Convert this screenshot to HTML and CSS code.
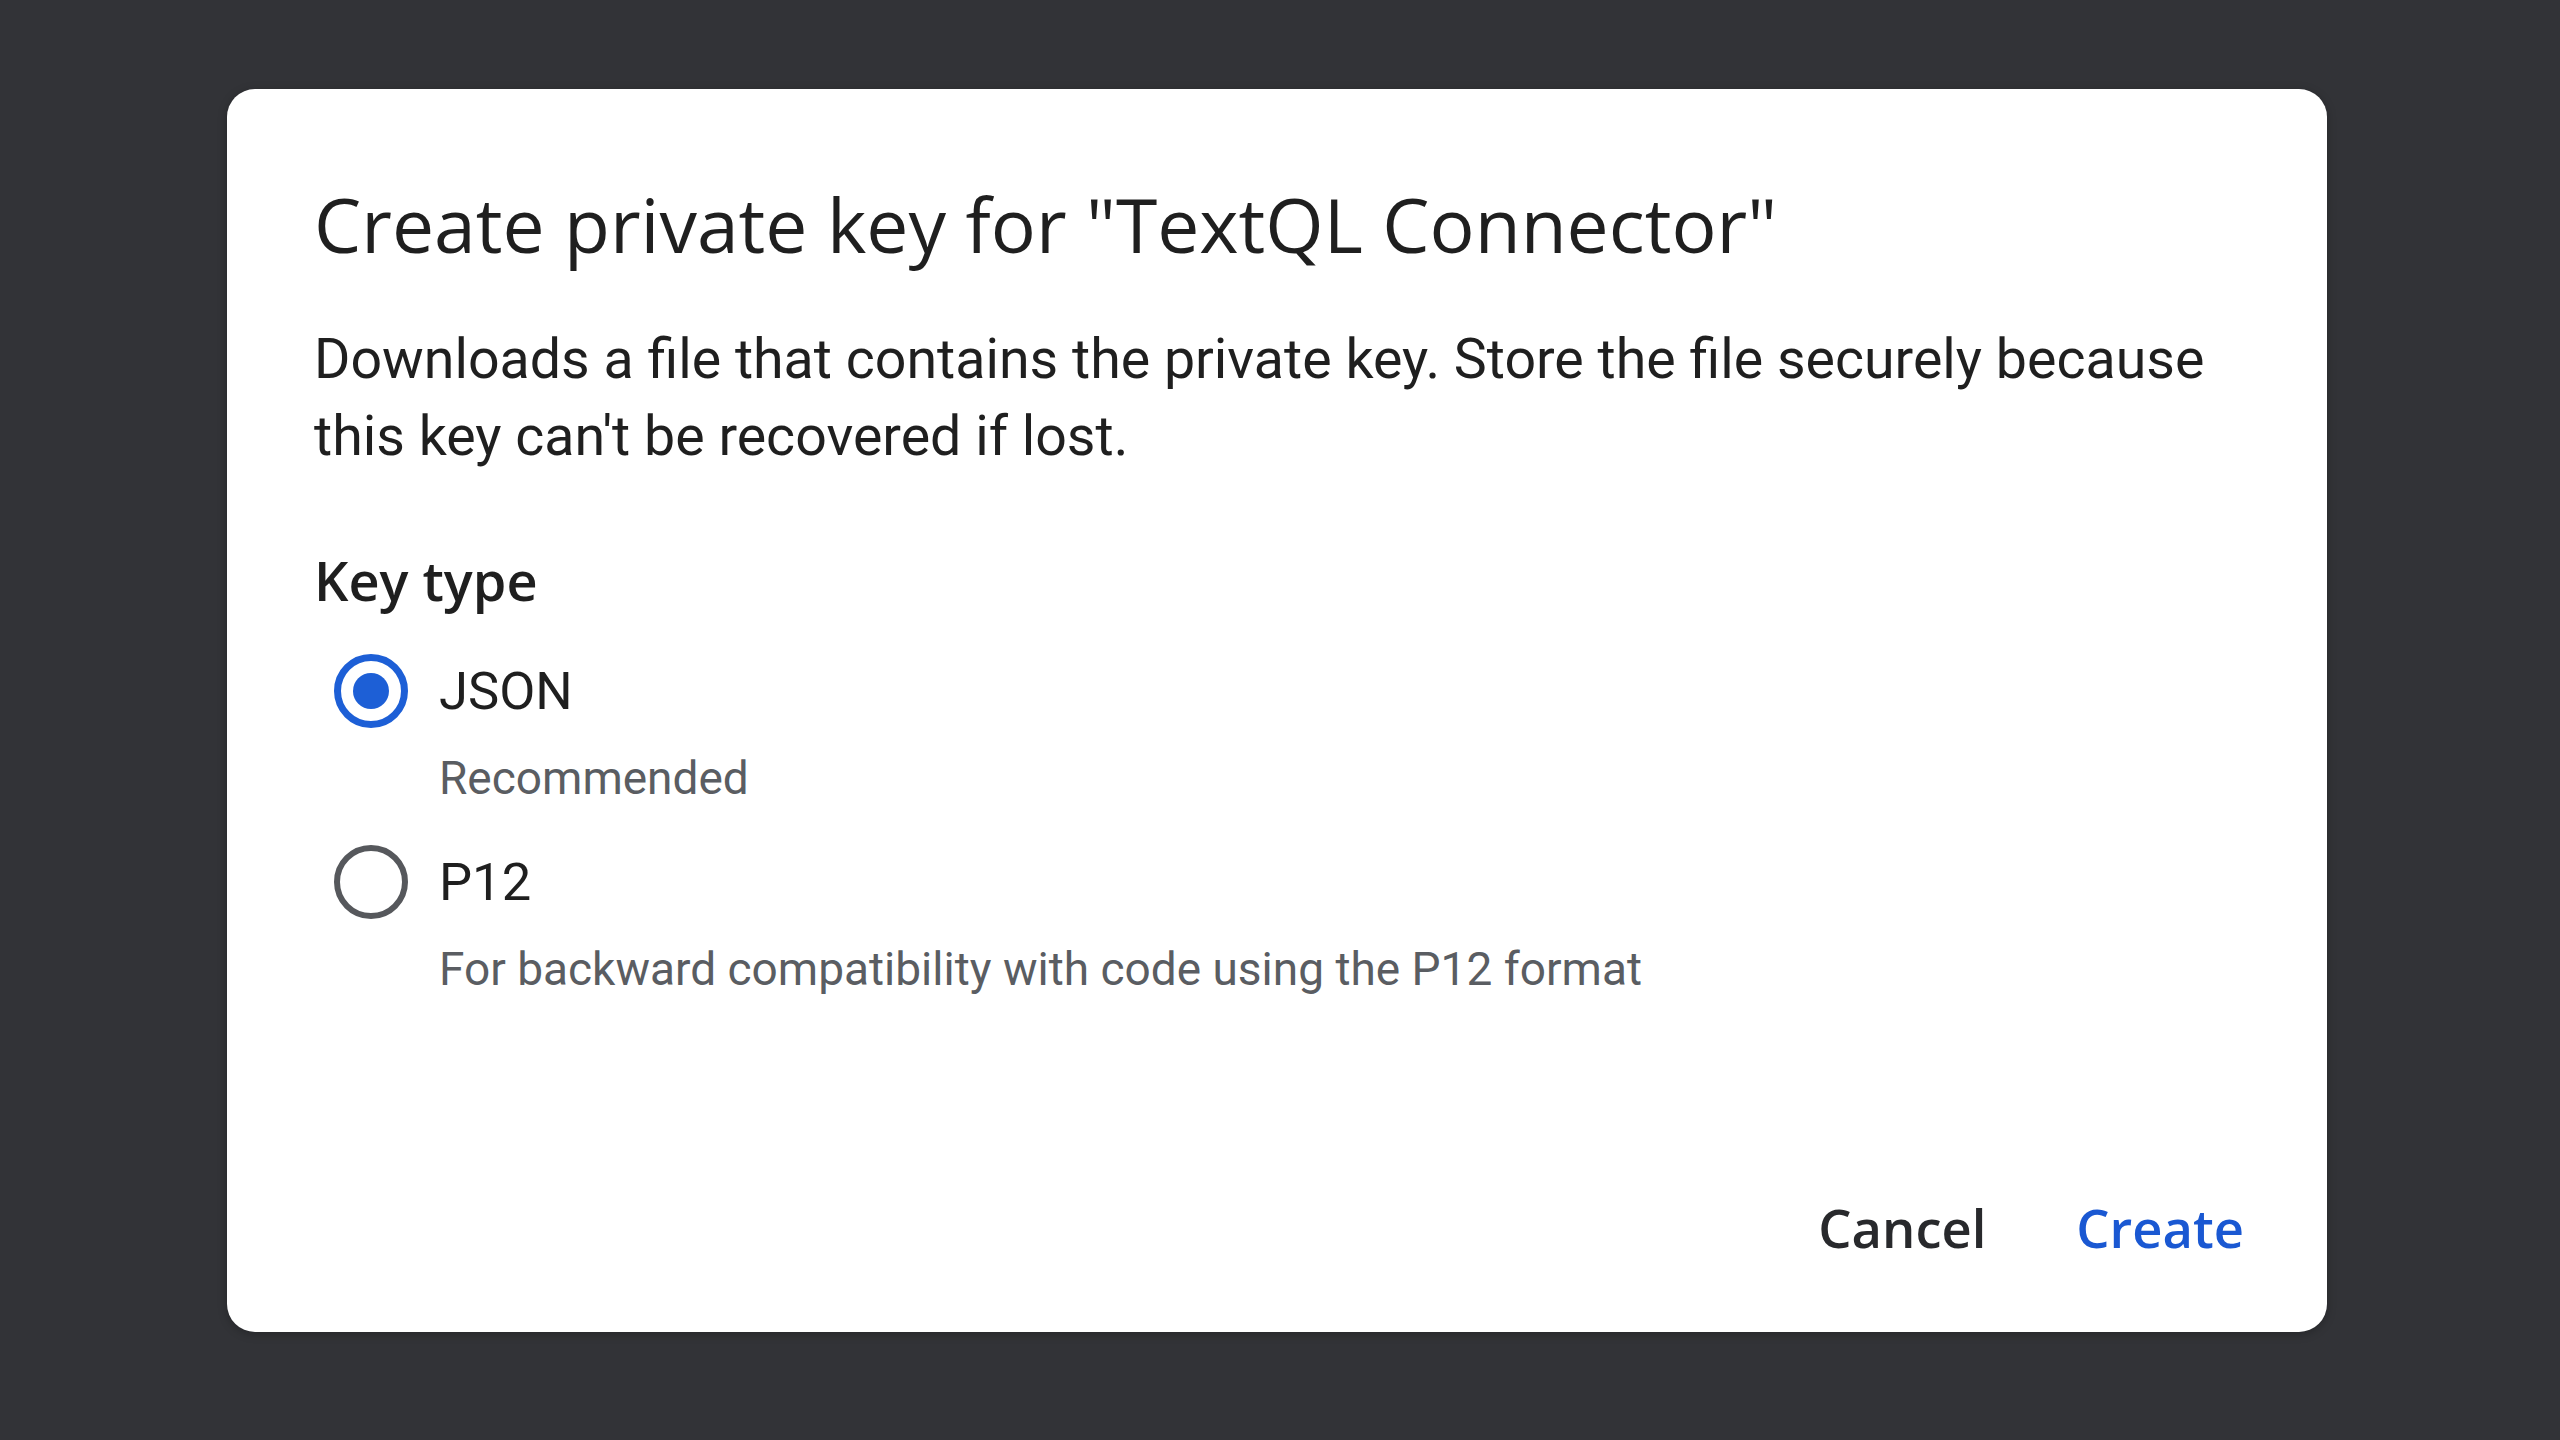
FILE: index.html
```html
<!DOCTYPE html>
<html lang="en">

    <head>
        <meta charset="UTF-8">
        <meta name="viewport" content="width=device-width, initial-scale=1.0">
        <title>Create private key</title>

        <link rel="stylesheet" href="styles.css">
    </head>

    <body>
        <div class="dialog">
            <h1 class="title">Create private key for "TextQL Connector"</h1>

            <p class="description">Downloads a file that contains the private key. Store the file securely because this key can't be recovered if lost.</p>

            <div class="key-type">Key type</div>

            <div class="options">
                <div class="option">
                    <label class="option-row">
                        <span class="radio checked"></span>
                        <span class="option-label">JSON</span>
                    </label>
                    <div class="option-hint">Recommended</div>
                </div>

                <div class="option">
                    <label class="option-row">
                        <span class="radio"></span>
                        <span class="option-label">P12</span>
                    </label>
                    <div class="option-hint">For backward compatibility with code using the P12 format</div>
                </div>
            </div>

            <div class="actions">
                <button class="btn cancel">Cancel</button>
                <button class="btn create">Create</button>
            </div>
        </div>
    </body>

</html>
```

FILE: styles.css
```css
* {
    margin: 0;
    padding: 0;
    box-sizing: border-box;
}

body {
    width: 100%;
    height: 100vh;
    padding: 89px 0 0 227px;

    background-color: #323337;
    font-family: Roboto, "Noto Sans", sans-serif;
    color: #1f1f1f;
}

.dialog {
    width: 2100px;
    padding: 90px 83px 72px 87px;

    background-color: #ffffff;
    border-radius: 28px;
    box-shadow: 0 2px 10px rgba(0, 0, 0, 0.25);
}

.title {
    font-family: "Open Sans", sans-serif;
    font-size: 75px;
    font-weight: 400;
    line-height: 90px;
    color: #1f1f1f;
}

.description {
    margin-top: 52px;
    font-size: 55.5px;
    line-height: 77px;
}

.key-type {
    margin-top: 70px;
    font-family: "Open Sans", sans-serif;
    font-size: 54px;
    font-weight: 600;
    line-height: 70px;
}

.options {
    display: flex;
    flex-direction: column;
    gap: 39px;
    margin-top: 39px;
}

.option {
    display: flex;
    flex-direction: column;
    gap: 22px;
}

.option-row {
    display: flex;
    align-items: center;
    gap: 31px;
    padding-left: 20px;
    height: 74px;
}

.radio {
    display: flex;
    justify-content: center;
    align-items: center;
    width: 74px;
    height: 74px;
    border: 6px solid #56585c;
    border-radius: 50%;
}

.radio.checked {
    border: 7px solid #1d5fd6;
}

.radio.checked::after {
    content: "";
    width: 36px;
    height: 36px;
    border-radius: 50%;
    background-color: #1d5fd6;
}

.option-label {
    font-size: 52.5px;
    line-height: 74px;
}

.option-hint {
    padding-left: 125px;
    font-size: 46px;
    line-height: 56px;
    color: #5a5d62;
}

.actions {
    display: flex;
    justify-content: flex-end;
    gap: 90px;
    margin-top: 199px;
}

.btn {
    border: none;
    background: none;
    font-family: "Open Sans", sans-serif;
    font-size: 52.5px;
    font-weight: 600;
    line-height: 64px;
}

.cancel {
    color: #28292c;
}

.create {
    color: #1a58d2;
}
```
